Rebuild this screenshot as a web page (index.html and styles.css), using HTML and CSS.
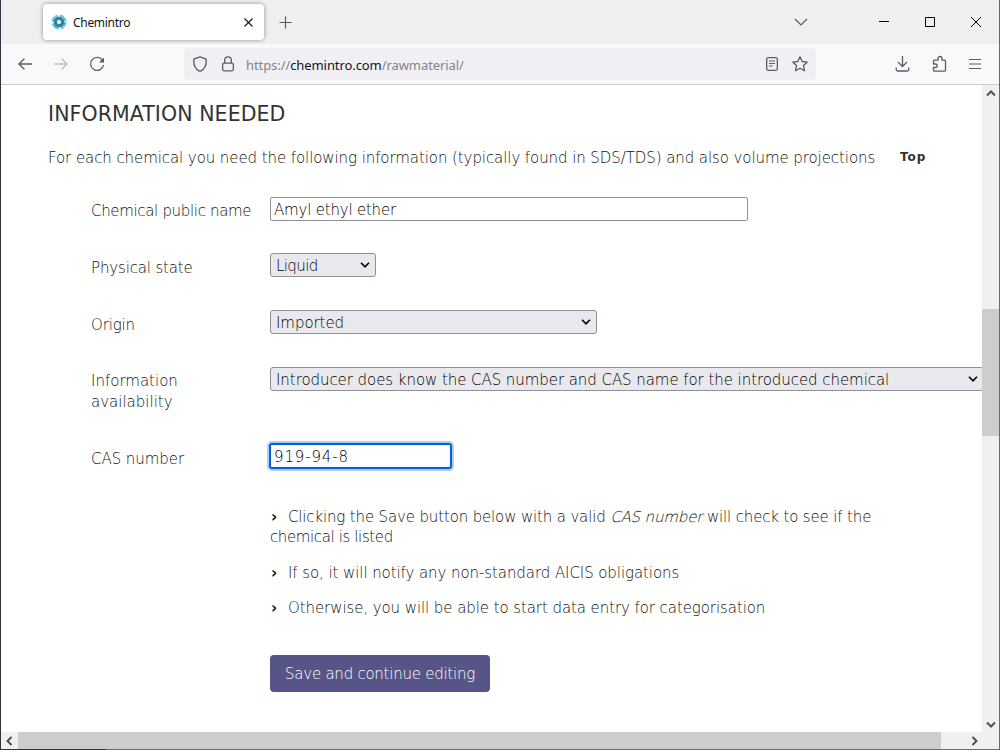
FILE: index.html
```
<!DOCTYPE html>
<html lang="en">
<head>
    <meta charset="UTF-8">
    <meta name="viewport" content="width=device-width, initial-scale=1.0">
    <title>Chemintro</title>
    <link rel="stylesheet" href="styles.css">
</head>
<body>
    <div class="window">
        <div class="tab-bar">
            <div class="tab">
                <svg class="favicon" width="16" height="16" viewBox="0 0 16 16" fill="none">
                    <circle cx="8" cy="8" r="6.2" stroke="#55c6ea" stroke-width="2.6" stroke-dasharray="2.9 1.97"/>
                    <circle cx="8" cy="8" r="6.2" stroke="#8e9ba3" stroke-width="2.4" stroke-dasharray="1.6 8.14" stroke-dashoffset="-3"/>
                    <circle cx="8" cy="8" r="3.6" stroke="#2b83a5" stroke-width="3.4"/>
                    <circle cx="8" cy="8" r="1.7" fill="#fff"/>
                </svg>
                <span class="tab-title">Chemintro</span>
                <svg width="9" height="9" viewBox="0 0 9 9" stroke="#15141a" stroke-width="1.1"><path d="M.5.5l8 8M8.5.5l-8 8"/></svg>
            </div>
            <svg class="new-tab" width="13" height="13" viewBox="0 0 13 13" stroke="#5b5b66" stroke-width="1.2"><path d="M6.5.5v12M.5 6.5h12"/></svg>
            <svg class="all-tabs" width="14" height="8" viewBox="0 0 14 8" fill="none" stroke="#5b5b66" stroke-width="1.2"><path d="M1 1l6 6 6-6"/></svg>
            <div class="window-buttons">
                <svg width="11" height="11" viewBox="0 0 11 11" stroke="#000"><path d="M0 4.5h10"/></svg>
                <svg width="11" height="11" viewBox="0 0 11 11" fill="none" stroke="#000"><path d="M.5.500h9v9h-9z"/></svg>
                <svg width="11" height="11" viewBox="0 0 11 11" stroke="#000"><path d="M0 0l10 10M10 0L0 10"/></svg>
            </div>
        </div>

        <div class="toolbar">
            <div class="nav-buttons">
                <svg width="16" height="16" viewBox="0 0 16 16" fill="none" stroke="#5b5b66" stroke-width="1.3"><path d="M15 8H2M7.500 2.500L2 8l5.500 5.500"/></svg>
                <svg width="16" height="16" viewBox="0 0 16 16" fill="none" stroke="#bdbdc3" stroke-width="1.3"><path d="M1 8h13M8.500 2.500L14 8l-5.500 5.500"/></svg>
                <svg width="16" height="16" viewBox="0 0 16 16" fill="none" stroke="#5b5b66" stroke-width="1.3"><path d="M13.300 4A6.500 6.500 0 1 0 14.500 9"/><path d="M15 1.500v5h-5z" fill="#5b5b66" stroke="none"/></svg>
            </div>
            <div class="url-bar">
                <svg width="16" height="16" viewBox="0 0 16 16" fill="none" stroke="#5b5b66" stroke-width="1.3" stroke-linejoin="round"><path d="M8 .9l6.200 2.300v2.600c0 4-2 7.300-5.200 9.100a2 2 0 0 1-2 0C3.800 13.100 1.800 9.800 1.800 5.800V3.200z"/></svg>
                <svg class="lock" width="14" height="16" viewBox="0 0 14 16" fill="none" stroke="#5b5b66" stroke-width="1.3"><rect x="1.650" y="7.150" width="10.700" height="7.700" rx="1.500"/><path d="M3.700 7V4.200a3.300 3.300 0 0 1 6.600 0V7"/></svg>
                <span class="url">https://<span class="domain">chemintro.com</span>/rawmaterial/</span>
                <svg class="reader" width="14" height="16" viewBox="0 0 14 16" fill="none" stroke="#5b5b66" stroke-width="1.3"><rect x="1.650" y="1.650" width="10.700" height="12.700" rx="1.500"/><path d="M4 5h6M4 7.500h6M4 10h3.500" stroke-width="1.100"/></svg>
                <svg width="18" height="18" viewBox="0 0 18 18" fill="none" stroke="#5b5b66" stroke-width="1.300" stroke-linejoin="round"><path d="M9 1.800l2.200 4.700 5.100.6-3.800 3.500 1 5.200L9 13.300l-4.500 2.500 1-5.200L1.700 7.100l5.100-.6z"/></svg>
            </div>
            <div class="tool-buttons">
                <svg width="16" height="16" viewBox="0 0 16 16" fill="none" stroke="#5b5b66" stroke-width="1.300"><path d="M8.500 0v10.500M4 6l4.500 4.500L13 6M2.200 11.500v2a1.500 1.500 0 0 0 1.500 1.500h9.600a1.500 1.500 0 0 0 1.500-1.500v-2"/></svg>
                <svg width="16" height="18" viewBox="0 0 16 18" fill="none" stroke="#5b5b66" stroke-width="1.300" stroke-linejoin="round"><path d="M2.500 9V6.200a1 1 0 0 1 1-1H7V3.500a2 2 0 0 1 4 0v1.700h2.500a1 1 0 0 1 1 1v9a1 1 0 0 1-1 1h-10a1 1 0 0 1-1-1v-2.700h2a1.750 1.750 0 0 0 0-3.500z"/></svg>
                <svg width="14" height="12" viewBox="0 0 14 12" stroke="#5b5b66" stroke-width="1.200"><path d="M1 1.500h12M1 6h12M1 10.500h12"/></svg>
            </div>
        </div>

        <div class="viewport">
            <div class="page">
                <h1>INFORMATION NEEDED</h1>
                <div class="intro">
                    <p>For each chemical you need the following information (typically found in SDS/TDS) and also volume projections</p>
                    <a class="top-link">Top</a>
                </div>

                <div class="field field-name">
                    <label for="name">Chemical public name</label>
                    <input class="name-input" type="text" id="name" value="Amyl ethyl ether">
                </div>
                <div class="field">
                    <label for="state">Physical state</label>
                    <div class="select select-state">
                        <select id="state"><option>Liquid</option></select>
                        <svg width="10" height="6" viewBox="0 0 10 6"><path d="M1 .8l4 4 4-4"/></svg>
                    </div>
                </div>
                <div class="field">
                    <label for="origin">Origin</label>
                    <div class="select select-origin">
                        <select id="origin"><option>Imported</option></select>
                        <svg width="10" height="6" viewBox="0 0 10 6"><path d="M1 .8l4 4 4-4"/></svg>
                    </div>
                </div>
                <div class="field field-info">
                    <label for="info">Information availability</label>
                    <div class="select select-info">
                        <select id="info"><option>Introducer does know the CAS number and CAS name for the introduced chemical</option></select>
                        <svg width="10" height="6" viewBox="0 0 10 6"><path d="M1 .8l4 4 4-4"/></svg>
                    </div>
                </div>
                <div class="field field-cas">
                    <label for="cas">CAS number</label>
                    <input class="cas-input" type="text" id="cas" value="919-94-8">
                </div>

                <div class="help">
                    <p class="help-cas"><b>›</b>Clicking the Save button below with a valid <i>CAS number</i> will check to see if the<br><span class="listed">chemical is listed</span></p>
                    <p><b>›</b>If so, it will notify any non-standard AICIS obligations</p>
                    <p><b>›</b>Otherwise, you will be able to start data entry for categorisation</p>
                    <button class="save">Save and continue editing</button>
                </div>
            </div>

            <div class="scroll-y">
                <svg width="10" height="7" viewBox="0 0 10 7"><path d="M1 5.500l4-4 4 4"/></svg>
                <div class="thumb-y"></div>
                <svg width="10" height="7" viewBox="0 0 10 7"><path d="M1 1.500l4 4 4-4"/></svg>
            </div>
        </div>
        <div class="scroll-x">
            <svg width="7" height="10" viewBox="0 0 7 10"><path d="M5.500 1l-4 4 4 4"/></svg>
            <div class="thumb-x"></div>
            <svg width="7" height="10" viewBox="0 0 7 10"><path d="M1.500 1l4 4-4 4"/></svg>
        </div>
        <div class="window-edge"></div>
    </div>
</body>
</html>
```
FILE: styles.css
```
* {
    box-sizing: border-box;
}

body {
    margin: 0;
    font-family: "DejaVu Sans Light", "DejaVu Sans", Verdana, sans-serif;
    font-weight: 200;
    font-size: 15px;
    letter-spacing: -0.08px;
    color: #111;
}

svg {
    display: block;
    flex-shrink: 0;
}

h1, p {
    margin: 0;
}

.window {
    width: 1000px;
    height: 750px;
    display: flex;
    flex-direction: column;
    overflow: hidden;
    background-color: #fff;
    border-left: 1px solid #33323e;
    border-right: 1px solid #6b6b6b;
}

/* Browser chrome */
.tab-bar {
    height: 44px;
    flex-shrink: 0;
    display: flex;
    align-items: center;
    background-color: #efefef;
    padding-left: 42px;
    font-family: "Noto Sans", "Open Sans", sans-serif;
    font-weight: 400;
}

.tab {
    width: 221px;
    height: 36px;
    display: flex;
    align-items: center;
    padding: 0 11px 0 8px;
    border-radius: 4px;
    background-color: #fff;
    box-shadow: 0 0 4px rgba(0, 0, 0, 0.4);
}

.tab-title {
    flex: 1;
    margin-left: 6px;
    font-size: 12px;
    letter-spacing: -0.3px;
    color: #15141a;
}

.new-tab {
    margin-left: 15px;
}

.all-tabs {
    margin-left: auto;
}

.window-buttons {
    display: flex;
    gap: 35px;
    margin: 0 17px 0 71px;
}

.toolbar {
    height: 41px;
    flex-shrink: 0;
    display: flex;
    align-items: center;
    background-color: #f9f9fb;
    border-bottom: 1px solid #ccc;
    font-family: "Noto Sans", "Open Sans", sans-serif;
    font-weight: 400;
}

.nav-buttons {
    display: flex;
    gap: 20px;
    width: 183px;
    padding-left: 16px;
}

.url-bar {
    width: 632px;
    height: 32px;
    display: flex;
    align-items: center;
    padding: 0 7px 0 8px;
    border-radius: 4px;
    background-color: #f0f0f4;
}

.lock {
    margin-left: 13px;
}

.url {
    flex: 1;
    margin: 2px 0 0 11px;
    font-size: 13px;
    letter-spacing: -0.08px;
    color: #84848b;
}

.domain {
    color: #15141a;
}

.reader {
    margin-right: 12px;
}

.tool-buttons {
    flex: 1;
    display: flex;
    align-items: center;
    justify-content: flex-end;
    gap: 21px;
    padding-right: 17px;
}

/* Page */
.viewport {
    flex: 1;
    min-height: 0;
    display: flex;
}

.page {
    flex: 1;
    min-width: 0;
    overflow: hidden;
    padding: 16px 0 0 47px;
}

h1 {
    height: 26px;
    font-family: "DejaVu Sans", Verdana, sans-serif;
    font-size: 20.5px;
    font-weight: 400;
    line-height: 26px;
    letter-spacing: 0.08px;
    color: #333;
    white-space: nowrap;
}

.intro {
    display: flex;
    align-items: center;
    height: 22px;
    margin: 20px 0 28px;
    white-space: nowrap;
}

.intro p {
    width: 852px;
}

.top-link {
    margin-top: -2px;
    font-family: "DejaVu Sans", Verdana, sans-serif;
    font-size: 12px;
    font-weight: 700;
    letter-spacing: 0.9px;
    color: #333;
}

.field {
    display: flex;
    height: 57px;
    padding-left: 43px;
}

.field label {
    width: 179px;
    flex-shrink: 0;
    padding: 5px 55px 0 0;
    line-height: 21px;
    letter-spacing: -0.15px;
}

.field-name {
    height: 56px;
}

.field-name label {
    padding: 4px 0 0;
    letter-spacing: -0.33px;
}

input, select, button {
    font: inherit;
    border: 1px solid #8f8f9d;
    margin: 0;
}

input {
    height: 24px;
    padding: 1px 3px 0;
    border-radius: 2px;
    color: #000;
    background-color: #fff;
}

.name-input {
    width: 478px;
    letter-spacing: -0.2px;
}

.select {
    display: grid;
    grid-template-columns: 1fr 16px;
    height: 24px;
    align-items: center;
}

.select select {
    grid-area: 1 / 1 / 2 / 3;
    width: 100%;
    height: 24px;
    appearance: none;
    padding: 1px 5px 0;
    border-radius: 3px;
    background-color: #e9e9ed;
    color: #000;
    letter-spacing: -0.06px;
}

.select svg {
    grid-area: 1 / 2;
    fill: none;
    stroke: #000;
    stroke-width: 1.6;
}

.select-state {
    width: 106px;
}

.select-state select {
    letter-spacing: -0.6px;
}

.select-origin {
    width: 327px;
}

.select-info {
    width: 714px;
    flex-shrink: 0;
}

.field-info {
    height: 75px;
}

.field-info label {
    padding-top: 4px;
    letter-spacing: 0;
}

.field-cas label {
    padding-top: 7px;
    letter-spacing: -0.05px;
}

.cas-input {
    width: 183px;
    height: 26px;
    margin: 1px 0 0 -1px;
    border: 2px solid #0061e0;
    border-radius: 3px;
    box-shadow: 0 0 0 2px #b2ccf2;
    letter-spacing: 0.85px;
}

.help {
    margin: 8px 0 0 222px;
    line-height: 20px;
    white-space: nowrap;
}

.help p {
    margin-bottom: 15px;
}

.help .help-cas {
    margin-bottom: 16px;
    letter-spacing: -0.15px;
}

.listed {
    letter-spacing: -0.38px;
}

.help b {
    display: inline-block;
    width: 18px;
    padding-left: 1px;
    font-family: "DejaVu Sans", Verdana, sans-serif;
    font-weight: 700;
}

.save {
    width: 220px;
    height: 37px;
    margin-top: 22px;
    padding: 0;
    border: 0;
    border-radius: 4px;
    background-color: #575587;
    color: #fff;
    letter-spacing: -0.25px;
}

/* Scrollbars */
.scroll-y {
    width: 17px;
    display: flex;
    flex-direction: column;
    align-items: center;
    padding: 5px 0 4px;
    background-color: #f0f0f0;
}

.scroll-y svg, .scroll-x svg {
    fill: none;
    stroke: #505050;
    stroke-width: 2;
}

.thumb-y {
    width: 17px;
    height: 127px;
    margin: 212px 0 auto;
    background-color: #cdcdcd;
}

.scroll-x {
    height: 17px;
    flex-shrink: 0;
    display: flex;
    align-items: center;
    padding: 0 21px 0 5px;
    background-color: #f0f0f0;
}

.thumb-x {
    width: 923px;
    height: 17px;
    margin: 0 auto 0 5px;
    background-color: #cdcdcd;
}

.window-edge {
    height: 1px;
    flex-shrink: 0;
    background: linear-gradient(to right, #33323e 105px, #6b6b6b 105px);
}
```
